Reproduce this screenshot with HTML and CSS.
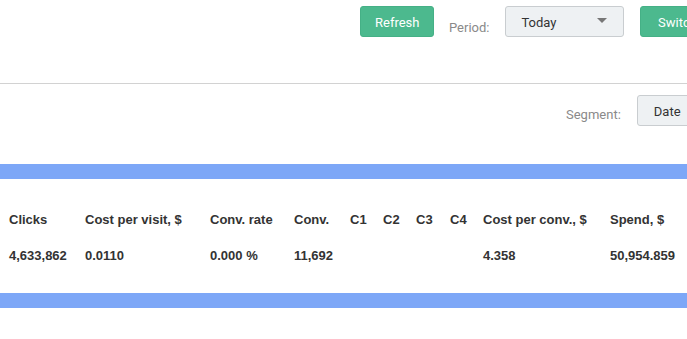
FILE: index.html
```
<!DOCTYPE html>
<html lang="en">
<head>
    <meta charset="UTF-8">
    <title>Stats</title>
    <link rel="stylesheet" href="styles.css">
</head>
<body>
<div class="toolbar">
    <button class="btn green">Refresh</button>
    <span class="label period">Period:</span>
    <div class="select">
        <span>Today</span>
        <i class="caret"></i>
    </div>
    <button class="btn green">Switch</button>
</div>
<div class="divider"></div>
<div class="segment">
    <span class="label">Segment:</span>
    <button class="btn light">Date</button>
</div>
<div class="band"></div>
<table class="stats">
    <tr>
        <th class="w1">Clicks</th>
        <th class="w2">Cost per visit, $</th>
        <th class="w3">Conv. rate</th>
        <th class="w4">Conv.</th>
        <th class="w5">C1</th>
        <th class="w5">C2</th>
        <th class="w6">C3</th>
        <th class="w5">C4</th>
        <th class="w7">Cost per conv., $</th>
        <th class="w8">Spend, $</th>
    </tr>
    <tr>
        <td>4,633,862</td>
        <td>0.0110</td>
        <td>0.000 %</td>
        <td>11,692</td>
        <td></td>
        <td></td>
        <td></td>
        <td></td>
        <td>4.358</td>
        <td>50,954.859</td>
    </tr>
</table>
<div class="band"></div>
</body>
</html>
```
FILE: styles.css
```
*{
    margin: 0;
    padding: 0;
    box-sizing: border-box;
}
body{
    width: 687px;
    overflow: hidden;
    background: #ffffff;
    font-family: Roboto, "Liberation Sans", sans-serif;
}
.toolbar{
    display: flex;
    padding: 6px 0 0 360px;
    height: 83px;
    align-items: flex-start;
    white-space: nowrap;
}
.btn{
    font-family: Roboto, sans-serif;
    font-size: 13px;
    height: 31px;
    padding-top: 1px;
    border-radius: 3px;
    cursor: pointer;
    flex-shrink: 0;
}
.green{
    background: #4cb98e;
    color: #ffffff;
    border: 1px solid #45b086;
    width: 74px;
    padding-left: 14px;
    padding-right: 14px;
}
.label{
    color: #8a8a8a;
    font-size: 13px;
}
.period{
    margin: 14px 16px 0 15px;
}
.select{
    width: 119px;
    height: 31px;
    flex-shrink: 0;
    background: #eef1f3;
    border: 1px solid #c9cdd0;
    border-radius: 3px;
    display: flex;
    align-items: center;
    justify-content: space-between;
    padding: 2px 16px 0 15px;
    font-size: 13px;
    color: #333333;
    margin-right: 16px;
}
.caret{
    width: 0;
    height: 0;
    border-left: 5px solid transparent;
    border-right: 5px solid transparent;
    border-top: 5px solid #777777;
    margin-top: -4px;
}
.divider{
    height: 1px;
    background: #d2d2d2;
}
.segment{
    display: flex;
    align-items: flex-start;
    padding: 11px 0 0 566px;
    height: 80px;
    white-space: nowrap;
}
.segment .label{
    margin: 12px 16px 0 0;
}
.light{
    background: #eef1f3;
    border: 1px solid #c9cdd0;
    color: #333333;
    padding-left: 16px;
    padding-right: 15px;
}
.band{
    height: 15px;
    background: #7da7f7;
}
.stats{
    border-collapse: collapse;
    table-layout: fixed;
    width: 700px;
    margin: 20px 0 19px;
    font-family: "Liberation Sans", Arial, sans-serif;
    font-size: 13px;
    font-weight: bold;
    color: #333333;
    white-space: nowrap;
}
.stats th,
.stats td{
    text-align: left;
    padding-left: 9px;
}
.stats th{
    height: 38px;
    padding-top: 2px;
}
.stats td{
    height: 37px;
}
.w1{ width: 76px; }
.w2{ width: 125px; }
.w3{ width: 84px; }
.w4{ width: 56px; }
.w5{ width: 33px; }
.w6{ width: 34px; }
.w7{ width: 127px; }
.w8{ width: 99px; }
```
